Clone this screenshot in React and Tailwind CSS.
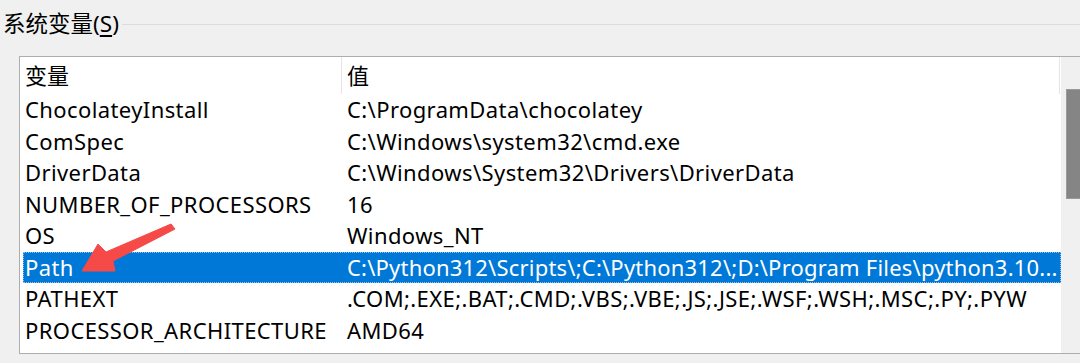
const ROWS = [
  ["ChocolateyInstall", "C:\\ProgramData\\chocolatey"],
  ["ComSpec", "C:\\Windows\\system32\\cmd.exe"],
  ["DriverData", "C:\\Windows\\System32\\Drivers\\DriverData"],
  ["NUMBER_OF_PROCESSORS", "16"],
  ["OS", "Windows_NT"],
  // list view truncates this one, the ellipsis is part of what's shown
  ["Path", "C:\\Python312\\Scripts\\;C:\\Python312\\;D:\\Program Files\\python3.10..."],
  ["PATHEXT", ".COM;.EXE;.BAT;.CMD;.VBS;.VBE;.JS;.JSE;.WSF;.WSH;.MSC;.PY;.PYW"],
  ["PROCESSOR_ARCHITECTURE", "AMD64"],
];

const FONT = { fontFamily: '"Noto Sans", "Noto Sans CJK SC", sans-serif' };

export default function App() {
  return (
    <div
      className="relative w-[1080px] h-[363px] overflow-hidden bg-[#f0f0f0] text-black"
      style={FONT}
    >
      {/* group header */}
      <div className="flex items-center h-[50px] pl-[3px] -mt-[1px]">
        <span className="text-[22.5px] leading-none whitespace-nowrap">
          系统变量(<span className="underline underline-offset-[3px]">S</span>)
        </span>
        <div className="flex-1 h-px bg-[#dcdcdc] ml-[3px] mt-[1px]" />
      </div>

      {/* list view */}
      <div className="ml-[19px] mt-[7px] w-[1080px] h-[298px] border border-[#adadad] bg-white flex">
        <div className="w-[1041px] shrink-0 flex flex-col">
          <div className="flex h-[37px] shrink-0 text-[22px]">
            <div className="w-[322px] pl-[5px] pt-[2px] border-r border-[#e5e5e5]">变量</div>
            <div className="w-[718px] pl-[5px] pt-[2px] border-r border-[#e5e5e5]">值</div>
          </div>
          {ROWS.map(([name, value]) => {
            const sel = name === "Path";
            return (
              <div
                key={name}
                className={`flex h-[31.5px] items-center text-[22px] tracking-[0.4px] ml-[3px] ${
                  sel ? "bg-[#0078d7] text-white outline-1 outline-dotted outline-[#9bbbe0] -outline-offset-1" : ""
                }`}
              >
                <div className="w-[319px] pl-[2px] whitespace-nowrap overflow-hidden">{name}</div>
                <div className={`flex-1 min-w-0 pl-[5px] whitespace-nowrap ${sel ? "tracking-[0.2px]" : ""}`}>
                  {value}
                </div>
              </div>
            );
          })}
        </div>
        {/* scrollbar */}
        <div className="flex-1 bg-[#f0f0f0] pt-[32px] pl-[5px]">
          <div className="h-[110px] bg-[#858585] border border-[#9a9a9a]" />
        </div>
      </div>

      {/* annotation arrow */}
      <svg className="absolute left-0 top-0 pointer-events-none" width="1080" height="363">
        <polygon
          points="82,271 98,244 106,252 171,224 175,229 113,261 115,271"
          fill="#f54a48"
          stroke="#f54a48"
          strokeWidth="1"
          strokeLinejoin="round"
        />
      </svg>
    </div>
  );
}
